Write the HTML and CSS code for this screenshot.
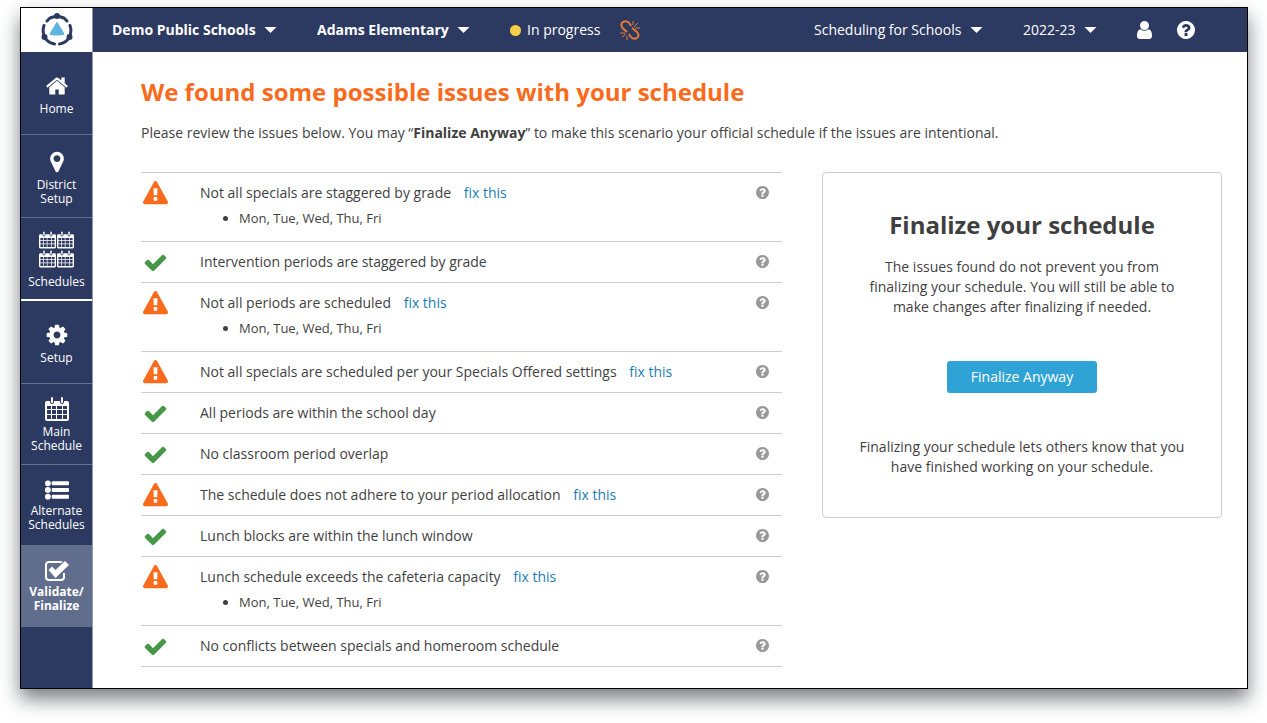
FILE: index.html
```html
<!DOCTYPE html>
<html lang="en">
<head>
<meta charset="utf-8">
<meta name="viewport" content="width=device-width, initial-scale=1">
<title>Validate / Finalize</title>
<link rel="stylesheet" href="styles.css">
</head>
<body>

<!-- Icon shapes -->
<svg class="sprite" aria-hidden="true">
  <symbol id="home" viewBox="0 0 1792 1792"><path d="M1472 992v480q0 26-19 45t-45 19h-384v-384h-256v384h-384q-26 0-45-19t-19-45v-480q0-1 .5-3t.5-3l575-474 575 474q1 2 1 6zm223-69l-62 74q-8 9-21 11h-3q-13 0-21-7l-692-577-692 577q-12 8-24 7-13-2-21-11l-62-74q-8-10-7-23.5t11-21.5l719-599q32-26 76-26t76 26l244 204v-195q0-14 9-23t23-9h192q14 0 23 9t9 23v408l219 182q10 8 11 21.5t-7 23.5z"/></symbol>
  <symbol id="marker" viewBox="0 0 1792 1792"><path d="M1152 640q0-106-75-181t-181-75-181 75-75 181 75 181 181 75 181-75 75-181zm256 0q0 109-33 179l-364 774q-16 33-47.5 52t-67.5 19-67.5-19-46.5-52l-365-774q-33-70-33-179 0-212 150-362t362-150 362 150 150 362z"/></symbol>
  <symbol id="cog" viewBox="0 0 1792 1792"><path d="M1152 896q0-106-75-181t-181-75-181 75-75 181 75 181 181 75 181-75 75-181zm512-109v222q0 12-8 23t-20 13l-185 28q-19 54-39 91 35 50 107 138 10 12 10 25t-9 23q-27 37-99 108t-94 71q-12 0-26-9l-138-108q-44 23-91 38-16 136-29 186-7 28-36 28h-222q-14 0-24.5-8.5t-11.5-21.5l-28-184q-49-16-90-37l-141 107q-10 9-25 9-14 0-25-11-126-114-165-168-7-10-7-23 0-12 8-23 15-21 51-66.5t54-70.5q-27-50-41-99l-183-27q-13-2-21-12.5t-8-23.5v-222q0-12 8-23t19-13l186-28q14-46 39-92-40-57-107-138-10-12-10-24 0-10 9-23 26-36 98.5-107.5t94.5-71.5q13 0 26 10l138 107q44-23 91-38 16-136 29-186 7-28 36-28h222q14 0 24.5 8.5t11.5 21.5l28 184q49 16 90 37l142-107q9-9 24-9 13 0 25 10 129 119 165 170 7 8 7 22 0 12-8 23-15 21-51 66.5t-54 70.5q26 50 41 98l183 28q13 2 21 12.5t8 23.5z"/></symbol>
  <symbol id="check" viewBox="0 0 1792 1792"><path d="M1671 566q0 40-28 68l-724 724-136 136q-28 28-68 28t-68-28l-136-136-362-362q-28-28-28-68t28-68l136-136q28-28 68-28t68 28l294 295 656-657q28-28 68-28t68 28l136 136q28 28 28 68z"/></symbol>
  <symbol id="warning" viewBox="0 0 1792 1792"><path d="M1024 1375v-190q0-14-9.500-23.500t-22.500-9.500h-192q-13 0-22.500 9.500t-9.500 23.500v190q0 14 9.500 23.500t22.500 9.500h192q13 0 22.500-9.500t9.500-23.500zm-2-374l18-459q0-12-10-19-13-11-24-11h-220q-11 0-24 11-10 7-10 21l17 457q0 10 10 16.500t24 6.500h185q14 0 23.500-6.500t10.500-16.500zm-14-934l768 1408q35 63-2 126-17 29-46.500 46t-63.500 17h-1536q-34 0-63.500-17t-46.500-46q-37-63-2-126l768-1408q17-31 47-49t65-18 65 18 47 49z"/></symbol>
  <symbol id="question" viewBox="128 128 1536 1536"><path d="M1024 1376v-192q0-14-9-23t-23-9h-192q-14 0-23 9t-9 23v192q0 14 9 23t23 9h192q14 0 23-9t9-23zm256-672q0-88-55.500-163t-138.500-116-170-41q-243 0-371 213-15 24 8 42l132 100q7 6 19 6 16 0 25-12 53-68 86-92 34-24 86-24 48 0 85.500 26t37.500 59q0 38-20 61t-68 45q-63 28-115.500 86.500t-52.500 125.500v36q0 14 9 23t23 9h192q14 0 23-9t9-23q0-19 21.500-49.500t54.500-49.500q32-18 49-28.500t46-35 44.500-48 28-60.500 12.500-81zm384 192q0 209-103 385.500t-279.500 279.500-385.500 103-385.500-103-279.500-279.500-103-385.500 103-385.500 279.500-279.500 385.500-103 385.500 103 279.500 279.500 103 385.500z"/></symbol>
  <symbol id="user" viewBox="256 128 1280 1536"><path d="M1536 1399q0 109-62.500 187t-150.500 78h-854q-88 0-150.500-78t-62.500-187q0-85 8.500-160.500t31.500-152 58.500-131 94-89 134.500-34.500q131 128 313 128t313-128q76 0 134.500 34.500t94 89 58.500 131 31.500 152 8.500 160.500zm-256-887q0 159-112.500 271.500t-271.500 112.500-271.500-112.500-112.500-271.500 112.500-271.500 271.500-112.500 271.500 112.500 112.500 271.500z"/></symbol>
  <symbol id="calendar" viewBox="0 0 24 24">
    <path fill-rule="evenodd" d="M2 4h3v1a2 2 0 0 0 4 0V4h6v1a2 2 0 0 0 4 0V4h3a2 2 0 0 1 2 2v16a2 2 0 0 1-2 2H2a2 2 0 0 1-2-2V6a2 2 0 0 1 2-2zM2 9v3h4V9zM7 9v3h4V9zM12 9v3h5V9zM18 9v3h4V9zM2 13v4h4v-4zM7 13v4h4v-4zM12 13v4h5v-4zM18 13v4h4v-4zM2 18v4h4v-4zM7 18v4h4v-4zM12 18v4h5v-4zM18 18v4h4v-4z"/>
    <rect x="6" y="0" width="2" height="6" rx="1"/><rect x="16" y="0" width="2" height="6" rx="1"/>
  </symbol>
  <symbol id="list" viewBox="0 0 25 20">
    <circle cx="3" cy="3" r="3"/><circle cx="3" cy="10" r="3"/><circle cx="3" cy="17" r="3"/>
    <rect x="7" y="1" width="18" height="4" rx="1"/><rect x="7" y="8" width="18" height="4" rx="1"/><rect x="7" y="15" width="18" height="4" rx="1"/>
  </symbol>
  <symbol id="check-square" viewBox="0 0 24 20">
    <path fill="none" stroke="currentColor" stroke-width="2" d="M17 1.500Q16.500 1 15 1H4Q1 1 1 4v12q0 3 3 3h12q3 0 3-3v-4"/>
    <path d="M3.500 9L7 5.500l3.500 3.500L20 0l4 4-13.500 13z"/>
  </symbol>
  <symbol id="caret" viewBox="0 0 12 6"><path d="M0 0h12L6 6z"/></symbol>
</svg>

<div class="window">
  <aside class="sidebar">
    <a class="logo" href="#" aria-label="Dashboard">
      <svg width="32" height="34" viewBox="0 0 32 34">
        <g fill="none" stroke="#2c3a61" stroke-width="3" stroke-linecap="round">
          <path d="M6 8l3-3q3-1 7-2 4 1 7 2l3 3"/>
          <path d="M3 12.500Q1 18 3.500 24 7 30 13.500 31"/>
          <path d="M29 12.500q2 5.500-.5 11.500Q25 30 18.500 31"/>
        </g>
        <g fill="#2c3a61"><circle cx="16" cy="3" r="3"/><circle cx="3.500" cy="24" r="3"/><circle cx="28.500" cy="24" r="3"/></g>
        <path fill="#5fb5dc" d="M15 10q1-2 2 0l6 10q1 2-1 2-6 1-12 0-2 0-1-2z"/>
      </svg>
    </a>
    <nav class="menu">
      <a class="item" href="#"><svg class="icon"><use href="#home"/></svg>Home</a>
      <a class="item" href="#"><svg class="icon"><use href="#marker"/></svg>District<br>Setup</a>
      <a class="item item-group-end" href="#">
        <span class="calendars">
          <svg><use href="#calendar"/></svg><svg><use href="#calendar"/></svg>
          <svg><use href="#calendar"/></svg><svg><use href="#calendar"/></svg>
        </span>
        Schedules
      </a>
      <a class="item" href="#"><svg class="icon"><use href="#cog"/></svg>Setup</a>
      <a class="item item-small" href="#"><svg class="icon"><use href="#calendar"/></svg>Main<br>Schedule</a>
      <a class="item item-small" href="#"><svg class="icon icon-low"><use href="#list"/></svg>Alternate<br>Schedules</a>
      <a class="item item-small active" href="#" aria-current="page"><svg class="icon icon-low"><use href="#check-square"/></svg>Validate/<br>Finalize</a>
    </nav>
  </aside>

  <div class="page">
    <header class="topbar">
      <label class="picker picker-bold">
        <select aria-label="District"><option>Demo Public Schools</option></select>
        <svg class="caret"><use href="#caret"/></svg>
      </label>
      <label class="picker picker-bold">
        <select aria-label="School"><option>Adams Elementary</option></select>
        <svg class="caret"><use href="#caret"/></svg>
      </label>
      <span class="status">In progress</span>
      <svg class="unlinked" viewBox="0 0 20 20" role="img" aria-label="Not linked">
        <path stroke-width="2" d="M7 12L2.500 8Q0 4 3 2q4-2 7 2l1 2M12 8l5 4q3 4 0 6-4 2-7-2l-1-2"/>
        <path d="M13 1v4M18 3l-4 4M20 8h-5M0 13h5M2 17l4-3M7 20v-4"/>
      </svg>
      <div class="topbar-right">
        <label class="picker">
          <select aria-label="Product"><option>Scheduling for Schools</option></select>
          <svg class="caret"><use href="#caret"/></svg>
        </label>
        <label class="picker">
          <select aria-label="School year"><option>2022-23</option></select>
          <svg class="caret"><use href="#caret"/></svg>
        </label>
        <div class="tools">
          <button type="button" aria-label="Account"><svg width="15" height="18"><use href="#user"/></svg></button>
          <button type="button" aria-label="Help"><svg width="18" height="18"><use href="#question"/></svg></button>
        </div>
      </div>
    </header>

    <main class="content">
      <h1>We found some possible issues with your schedule</h1>
      <p class="intro">Please review the issues below. You may “<strong>Finalize Anyway</strong>” to make this scenario your official schedule if the issues are intentional.</p>

      <div class="columns">
        <ul class="issues">
          <li class="issue">
            <svg class="warn"><use href="#warning"/></svg>
            <div class="issue-text">Not all specials are staggered by grade <a href="#">fix this</a>
              <ul class="days"><li>Mon, Tue, Wed, Thu, Fri</li></ul>
            </div>
            <button type="button" class="help" aria-label="Help"><svg><use href="#question"/></svg></button>
          </li>
          <li class="issue">
            <svg class="ok"><use href="#check"/></svg>
            <div class="issue-text">Intervention periods are staggered by grade</div>
            <button type="button" class="help" aria-label="Help"><svg><use href="#question"/></svg></button>
          </li>
          <li class="issue">
            <svg class="warn"><use href="#warning"/></svg>
            <div class="issue-text">Not all periods are scheduled <a href="#">fix this</a>
              <ul class="days"><li>Mon, Tue, Wed, Thu, Fri</li></ul>
            </div>
            <button type="button" class="help" aria-label="Help"><svg><use href="#question"/></svg></button>
          </li>
          <li class="issue">
            <svg class="warn"><use href="#warning"/></svg>
            <div class="issue-text">Not all specials are scheduled per your Specials Offered settings <a href="#">fix this</a></div>
            <button type="button" class="help" aria-label="Help"><svg><use href="#question"/></svg></button>
          </li>
          <li class="issue">
            <svg class="ok"><use href="#check"/></svg>
            <div class="issue-text">All periods are within the school day</div>
            <button type="button" class="help" aria-label="Help"><svg><use href="#question"/></svg></button>
          </li>
          <li class="issue">
            <svg class="ok"><use href="#check"/></svg>
            <div class="issue-text">No classroom period overlap</div>
            <button type="button" class="help" aria-label="Help"><svg><use href="#question"/></svg></button>
          </li>
          <li class="issue">
            <svg class="warn"><use href="#warning"/></svg>
            <div class="issue-text">The schedule does not adhere to your period allocation <a href="#">fix this</a></div>
            <button type="button" class="help" aria-label="Help"><svg><use href="#question"/></svg></button>
          </li>
          <li class="issue">
            <svg class="ok"><use href="#check"/></svg>
            <div class="issue-text">Lunch blocks are within the lunch window</div>
            <button type="button" class="help" aria-label="Help"><svg><use href="#question"/></svg></button>
          </li>
          <li class="issue">
            <svg class="warn"><use href="#warning"/></svg>
            <div class="issue-text">Lunch schedule exceeds the cafeteria capacity <a href="#">fix this</a>
              <ul class="days"><li>Mon, Tue, Wed, Thu, Fri</li></ul>
            </div>
            <button type="button" class="help" aria-label="Help"><svg><use href="#question"/></svg></button>
          </li>
          <li class="issue">
            <svg class="ok"><use href="#check"/></svg>
            <div class="issue-text">No conflicts between specials and homeroom schedule</div>
            <button type="button" class="help" aria-label="Help"><svg><use href="#question"/></svg></button>
          </li>
        </ul>

        <section class="card">
          <h2>Finalize your schedule</h2>
          <p>The issues found do not prevent you from finalizing your schedule. You will still be able to make changes after finalizing if needed.</p>
          <button type="button" class="finalize">Finalize Anyway</button>
          <p>Finalizing your schedule lets others know that you have finished working on your schedule.</p>
        </section>
      </div>
    </main>
  </div>
</div>

</body>
</html>
```

FILE: styles.css
```css
* {
  box-sizing: border-box;
}

body {
  margin: 0;
  padding: 7px 19px 34px 20px;
  min-height: 100vh;
  display: flex;
  font-family: "Open Sans", sans-serif;
  font-size: 14px;
  line-height: 20px;
  color: #3f3f3f;
  background: white;
}

h1, h2, p, ul {
  margin: 0;
  padding: 0;
}

h1, h2 {
  font-size: 24px;
  font-weight: bold;
  line-height: 32px;
}

ul {
  list-style: none;
}

a {
  text-decoration: none;
}

button {
  padding: 0;
  border: 0;
  background: none;
  color: inherit;
  font: inherit;
  cursor: pointer;
}

svg {
  display: block;
  fill: currentColor;
}

.sprite {
  position: absolute;
  width: 0;
  height: 0;
}

.window {
  flex: 1;
  display: flex;
  border: 1px solid black;
  background: white;
  box-shadow: 0 10px 18px rgba(30, 40, 45, 0.6);
}

/* Left menu */
.sidebar {
  flex: none;
  width: 72px;
  background: #2c3a61;
  border-right: 1px solid #8f97ad;
}

.logo {
  display: flex;
  align-items: center;
  justify-content: center;
  height: 44px;
  background: white;
}

.item {
  display: flex;
  flex-direction: column;
  align-items: center;
  justify-content: center;
  height: 83px;
  padding-top: 3px;
  border-bottom: 1px solid #65708d;
  color: white;
  font-size: 12px;
  line-height: 14px;
  text-align: center;
}

.item-group-end {
  border-bottom: 2px solid white;
}

.item-small {
  height: 81px;
  padding-top: 1px;
}

.active {
  background: #606d8c;
  font-weight: bold;
}

.icon {
  width: 24px;
  height: 24px;
  margin-bottom: 4px;
}

.icon-low {
  height: 20px;
}

.calendars {
  display: grid;
  grid-template-columns: 17px 17px;
  gap: 1px;
  margin-bottom: 7px;
}

.calendars svg {
  width: 17px;
  height: 18px;
}

/* Top bar */
.page {
  flex: 1;
  min-width: 0;
}

.topbar {
  display: flex;
  align-items: center;
  height: 44px;
  padding: 0 52px 0 19px;
  background: #2c3a61;
  color: white;
}

.picker {
  display: flex;
  align-items: center;
  gap: 8px;
  margin-right: 40px;
}

.picker-bold {
  font-weight: bold;
}

.picker select {
  appearance: none;
  padding: 0;
  border: 0;
  background: none;
  color: inherit;
  font: inherit;
  cursor: pointer;
}

.caret {
  width: 13px;
  height: 6px;
}

.status {
  display: flex;
  align-items: center;
  gap: 6px;
}

.status:before {
  content: "";
  width: 11px;
  height: 11px;
  border-radius: 50%;
  background: #f9ce47;
}

.unlinked {
  width: 20px;
  height: 20px;
  margin-left: 20px;
  fill: none;
  stroke: #e87935;
}

.topbar-right {
  display: flex;
  margin-left: auto;
}

.tools {
  display: flex;
  align-items: center;
  gap: 25px;
}

/* Main content */
.content {
  padding: 24px 25px 20px 48px;
}

h1 {
  color: #f96b1c;
}

.intro {
  margin: 15px 0 29px;
}

.columns {
  display: flex;
  align-items: flex-start;
  gap: 40px;
}

.issues {
  flex: 1;
  border-top: 1px solid #ccc;
}

.issue {
  display: flex;
  padding: 0 13px 0 2px;
  border-bottom: 1px solid #ccc;
}

.issue-text {
  flex: 1;
  line-height: 40px;
}

.issue-text a {
  margin-left: 9px;
  color: #1a7db6;
}

.warn,
.ok {
  width: 25px;
  height: 25px;
  margin: 8px 32px 0 0;
  color: #f96b1c;
}

.ok {
  color: #449848;
}

.help {
  align-self: flex-start;
  margin-top: 13px;
  color: #999;
}

.help svg {
  width: 13px;
  height: 13px;
}

.days {
  margin-top: -2px;
  padding: 0 0 16px 39px;
  list-style: disc;
  font-size: 13px;
  line-height: 14px;
}

/* Finalize box */
.card {
  width: 400px;
  padding: 36px 36px 40px;
  border: 1px solid #ccc;
  border-radius: 4px;
  text-align: center;
}

h2 {
  margin-bottom: 16px;
}

.finalize {
  margin: 44px 0;
  padding: 6px 24px;
  border-radius: 3px;
  background: #2fa3d5;
  color: white;
}

@media screen and (max-width: 900px) {
  .columns {
    flex-direction: column;
  }

  .issues,
  .card {
    width: 100%;
  }
}
```
